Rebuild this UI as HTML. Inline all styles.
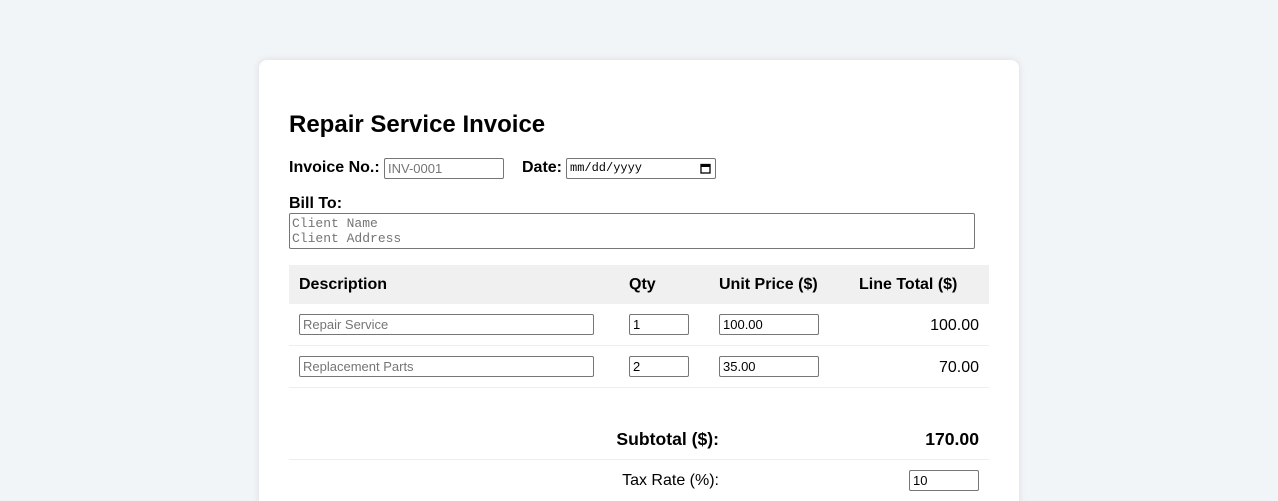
<!DOCTYPE html>
<html><head><meta charset="utf-8"><style>
*{box-sizing:border-box;margin:0;padding:0}
html,body{width:1278px;height:501px;overflow:hidden}
body{background:#f2f5f8;font-family:"Liberation Sans",Arial,sans-serif;position:relative;color:#000}
.card{position:absolute;left:259px;top:60px;width:760px;height:460px;background:#fff;border-radius:8px;box-shadow:0 0 8px rgba(0,0,0,0.1)}
.a{position:absolute;white-space:nowrap}
.b{font-weight:bold}
.in{position:absolute;border:1px solid #767676;border-radius:2px;background:#fff;font-size:13px;padding:0 3px;line-height:19px;height:21px}
.ph{color:#757575}
.line{position:absolute;left:289px;width:700px;height:1px;background:#eee}
</style></head><body>
<div class="card"></div>
<div class="a b" style="left:289px;top:111px;font-size:24px">Repair Service Invoice</div>
<div class="a b" style="left:289px;top:159px;font-size:16px">Invoice No.:</div>
<div class="in ph" style="left:384px;top:158px;width:120px;">INV-0001</div>
<div class="a b" style="left:522px;top:159px;font-size:16px">Date:</div>
<div class="in" style="left:566px;top:158px;width:150px;font-family:'Liberation Mono',monospace;font-size:12px">mm/dd/yyyy
<svg style="position:absolute;right:4px;top:4px" width="11" height="11" viewBox="0 0 11 11"><rect x="1" y="1.5" width="9" height="8.5" fill="none" stroke="#000" stroke-width="1.3"/><rect x="1" y="1.5" width="9" height="2.5" fill="#000"/></svg></div>
<div class="a b" style="left:289px;top:195px;font-size:16px">Bill To:</div>
<div class="in ph" style="left:289px;top:213px;width:686px;height:36px;font-family:'Liberation Mono',monospace;font-size:13px;line-height:15px;padding-top:2px;padding-left:2px">Client Name<br>Client Address</div>
<div style="position:absolute;left:289px;top:265px;width:700px;height:39px;background:#f0f0f0"></div>
<div class="a b" style="left:299px;top:276px;font-size:16px">Description</div>
<div class="a b" style="left:629px;top:276px;font-size:16px">Qty</div>
<div class="a b" style="left:719px;top:276px;font-size:16px">Unit Price ($)</div>
<div class="a b" style="left:859px;top:276px;font-size:16px">Line Total ($)</div>
<div class="in ph" style="left:299px;top:314px;width:295px">Repair Service</div>
<div class="in" style="left:629px;top:314px;width:60px">1</div>
<div class="in" style="left:719px;top:314px;width:100px">100.00</div>
<div class="a" style="right:299px;top:317px;font-size:16px">100.00</div>
<div class="line" style="top:345px"></div>
<div class="in ph" style="left:299px;top:356px;width:295px">Replacement Parts</div>
<div class="in" style="left:629px;top:356px;width:60px">2</div>
<div class="in" style="left:719px;top:356px;width:100px">35.00</div>
<div class="a" style="right:299px;top:359px;font-size:16px">70.00</div>
<div class="line" style="top:387px"></div>
<div class="a b" style="right:559px;top:429px;font-size:17.6px">Subtotal ($):</div>
<div class="a b" style="right:299px;top:429px;font-size:17.6px">170.00</div>
<div class="line" style="top:459px"></div>
<div class="a" style="right:559px;top:472px;font-size:16px">Tax Rate (%):</div>
<div class="in" style="left:909px;top:470px;width:70px">10</div>
</body></html>
